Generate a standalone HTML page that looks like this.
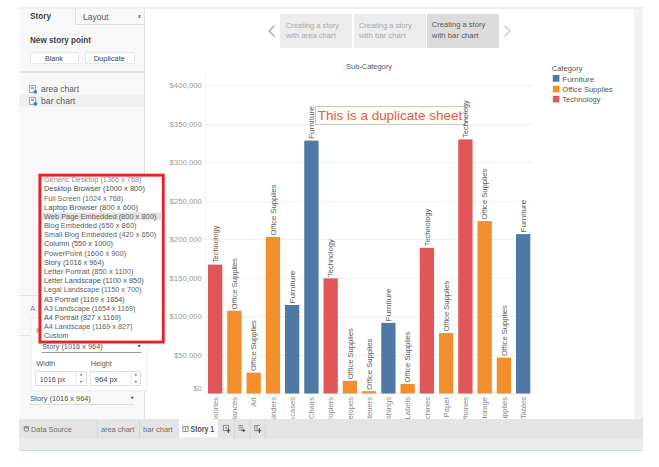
<!DOCTYPE html>
<html><head><meta charset="utf-8">
<style>
*{margin:0;padding:0}
html,body{width:659px;height:467px;overflow:hidden;background:#fff}
svg{position:absolute;left:0;top:0;font-family:"Liberation Sans",sans-serif}
</style></head><body>
<svg width="659" height="467" viewBox="0 0 659 467">
<rect x="19" y="7" width="624" height="2" fill="#efefef"/>
<rect x="19" y="9" width="125" height="410" fill="#f8f8f8"/>
<rect x="144" y="9" width="1" height="410" fill="#e0e0e0"/>
<rect x="75" y="9" width="1" height="15" fill="#dedede"/>
<rect x="75" y="24" width="69" height="1" fill="#dedede"/>
<text x="30" y="19.1" font-size="8.6" fill="#444" textLength="21" lengthAdjust="spacingAndGlyphs" font-weight="bold">Story</text>
<text x="83" y="20.3" font-size="8.6" fill="#555" textLength="25.5" lengthAdjust="spacingAndGlyphs">Layout</text>
<rect x="138.5" y="15" width="2" height="3" fill="#8a8a8a"/>
<text x="30" y="43.1" font-size="9.0" fill="#444" textLength="61" lengthAdjust="spacingAndGlyphs" font-weight="bold">New story point</text>
<rect x="30.5" y="52.5" width="48" height="11" fill="#fff" stroke="#e8e8e8" stroke-width="1"/>
<text x="44.9" y="61.3" font-size="8" fill="#444" textLength="18" lengthAdjust="spacingAndGlyphs">Blank</text>
<rect x="85.5" y="52.5" width="49" height="11" fill="#fff" stroke="#e8e8e8" stroke-width="1"/>
<text x="93.7" y="61.3" font-size="8" fill="#444" textLength="31.2" lengthAdjust="spacingAndGlyphs">Duplicate</text>
<rect x="19" y="71" width="125" height="2" fill="#e6e6e6"/>
<rect x="19" y="94.5" width="125" height="12.5" fill="#efefef"/>
<rect x="29.5" y="85.5" width="6" height="7" fill="#f4f4f4" stroke="#aaaaaa" stroke-width="1.1"/>
<rect x="31" y="87" width="3" height="2" fill="#aaa"/>
<circle cx="35.3" cy="91.8" r="1.9" fill="#3b8ab5"/>
<text x="41" y="92" font-size="9.0" fill="#5a5a5a" textLength="38" lengthAdjust="spacingAndGlyphs">area chart</text>
<rect x="29.5" y="97.5" width="6" height="7" fill="#f4f4f4" stroke="#aaaaaa" stroke-width="1.1"/>
<rect x="31" y="99" width="3" height="2" fill="#aaa"/>
<circle cx="35.3" cy="103.8" r="1.9" fill="#3b8ab5"/>
<text x="41" y="104" font-size="9.0" fill="#5a5a5a" textLength="34.3" lengthAdjust="spacingAndGlyphs">bar chart</text>
<rect x="19" y="295" width="20" height="1" fill="#e2e2e2"/>
<text x="30" y="311" font-size="8" fill="#888">A</text>
<rect x="19" y="335" width="12" height="1" fill="#e2e2e2"/>
<rect x="31" y="318" width="116" height="73" fill="#fff" stroke="#ececec" stroke-width="1"/>
<text x="36.2" y="332.7" font-size="7" fill="#666">H</text>
<text x="42.2" y="349.3" font-size="7.6" fill="#555" textLength="60.5" lengthAdjust="spacingAndGlyphs">Story (1016 x 964)</text>
<path d="M137.5,345 L141,345 L139.25,347.5 Z" fill="#555"/>
<rect x="41.7" y="352" width="99.3" height="1" fill="#999"/>
<text x="36.2" y="366.2" font-size="7.6" fill="#555" textLength="19.1" lengthAdjust="spacingAndGlyphs">Width</text>
<text x="90.8" y="366.2" font-size="7.6" fill="#555" textLength="21" lengthAdjust="spacingAndGlyphs">Height</text>
<rect x="35.5" y="371.5" width="51" height="14" fill="#fff" stroke="#e0e0e0" stroke-width="1"/>
<rect x="75.7" y="372" width="1" height="13" fill="#e6e6e6"/>
<text x="39.8" y="382.3" font-size="7.6" fill="#444" textLength="25.5" lengthAdjust="spacingAndGlyphs">1016 px</text>
<path d="M79.5,375.5 L82.5,375.5 L81.0,373.5 Z" fill="#777"/>
<path d="M79.5,381 L82.5,381 L81.0,383 Z" fill="#777"/>
<rect x="90.5" y="371.5" width="50" height="14" fill="#fff" stroke="#e0e0e0" stroke-width="1"/>
<rect x="130.5" y="372" width="1" height="13" fill="#e6e6e6"/>
<text x="94.8" y="382.3" font-size="7.6" fill="#444" textLength="22.8" lengthAdjust="spacingAndGlyphs">964 px</text>
<path d="M134.3,375.5 L137.3,375.5 L135.8,373.5 Z" fill="#777"/>
<path d="M134.3,381 L137.3,381 L135.8,383 Z" fill="#777"/>
<text x="30.2" y="400.8" font-size="7.6" fill="#555" textLength="60.6" lengthAdjust="spacingAndGlyphs">Story (1016 x 964)</text>
<path d="M130.5,396.8 L134,396.8 L132.25,399.3 Z" fill="#555"/>
<rect x="29.5" y="404" width="104.5" height="1" fill="#dcdcdc"/>
<rect x="39.9" y="175.15" width="123.35" height="166.9" fill="#fff" stroke="#e8202a" stroke-width="2.9"/>
<rect x="41.5" y="212.4" width="120" height="8" fill="#e4e4e4"/>
<clipPath id="cl"><rect x="41.5" y="176.5" width="120" height="164.3"/></clipPath><g clip-path="url(#cl)">
<text x="43.9" y="182.2" font-size="7.6" fill="#888" textLength="97.6" lengthAdjust="spacingAndGlyphs">Generic Desktop (1366 x 768)</text>
<text x="43.9" y="191.38" font-size="7.6" fill="#4d4d4d" textLength="101.0" lengthAdjust="spacingAndGlyphs">Desktop Browser (1000 x 800)</text>
<text x="43.9" y="200.56" font-size="7.6" fill="#666" textLength="79.3" lengthAdjust="spacingAndGlyphs">Full Screen (1024 x 768)</text>
<text x="43.9" y="209.74" font-size="7.6" fill="#505050" textLength="94.2" lengthAdjust="spacingAndGlyphs">Laptop Browser (800 x 600)</text>
<text x="43.9" y="218.92" font-size="7.6" fill="#606060" textLength="112.4" lengthAdjust="spacingAndGlyphs">Web Page Embedded (800 x 800)</text>
<text x="43.9" y="228.1" font-size="7.6" fill="#5e5e5e" textLength="92.6" lengthAdjust="spacingAndGlyphs">Blog Embedded (650 x 860)</text>
<text x="43.9" y="237.28" font-size="7.6" fill="#646464" textLength="112.4" lengthAdjust="spacingAndGlyphs">Small Blog Embedded (420 x 650)</text>
<text x="43.9" y="246.46" font-size="7.6" fill="#505050" textLength="69.1" lengthAdjust="spacingAndGlyphs">Column (550 x 1000)</text>
<text x="43.9" y="255.64" font-size="7.6" fill="#606060" textLength="82.3" lengthAdjust="spacingAndGlyphs">PowerPoint (1600 x 900)</text>
<text x="43.9" y="264.82" font-size="7.6" fill="#505050" textLength="60.0" lengthAdjust="spacingAndGlyphs">Story (1016 x 964)</text>
<text x="43.9" y="274.0" font-size="7.6" fill="#606060" textLength="89.6" lengthAdjust="spacingAndGlyphs">Letter Portrait (850 x 1100)</text>
<text x="43.9" y="283.18" font-size="7.6" fill="#505050" textLength="99.8" lengthAdjust="spacingAndGlyphs">Letter Landscape (1100 x 850)</text>
<text x="43.9" y="292.36" font-size="7.6" fill="#646464" textLength="97.6" lengthAdjust="spacingAndGlyphs">Legal Landscape (1150 x 700)</text>
<text x="43.9" y="301.54" font-size="7.6" fill="#505050" textLength="80.9" lengthAdjust="spacingAndGlyphs">A3 Portrait (1169 x 1654)</text>
<text x="43.9" y="310.72" font-size="7.6" fill="#606060" textLength="91.4" lengthAdjust="spacingAndGlyphs">A3 Landscape (1654 x 1169)</text>
<text x="43.9" y="319.9" font-size="7.6" fill="#505050" textLength="77.1" lengthAdjust="spacingAndGlyphs">A4 Portrait (827 x 1169)</text>
<text x="43.9" y="329.08" font-size="7.6" fill="#5e5e5e" textLength="88.5" lengthAdjust="spacingAndGlyphs">A4 Landscape (1169 x 827)</text>
<text x="43.9" y="338.26" font-size="7.6" fill="#555" textLength="24.7" lengthAdjust="spacingAndGlyphs">Custom</text>
</g>
<polyline points="274.5,25.5 269,31 274.5,36.5" fill="none" stroke="#a8a8a8" stroke-width="1.3"/>
<rect x="280" y="14" width="72" height="34" fill="#ececec"/>
<rect x="354" y="14" width="72" height="34" fill="#ececec"/>
<rect x="427" y="14" width="72" height="34" fill="#dcdcdc"/>
<text x="285.7" y="27.6" font-size="7.9" fill="#a9a9a9" textLength="53.3" lengthAdjust="spacingAndGlyphs">Creating a story</text>
<text x="285.7" y="38" font-size="7.9" fill="#a9a9a9" textLength="50.1" lengthAdjust="spacingAndGlyphs">with area chart</text>
<text x="358.9" y="27.6" font-size="7.9" fill="#a9a9a9" textLength="52.8" lengthAdjust="spacingAndGlyphs">Creating a story</text>
<text x="358.9" y="38" font-size="7.9" fill="#a9a9a9" textLength="46.7" lengthAdjust="spacingAndGlyphs">with bar chart</text>
<text x="431.8" y="27.4" font-size="7.9" fill="#5a5a5a" textLength="53.4" lengthAdjust="spacingAndGlyphs">Creating a story</text>
<text x="431.8" y="37.9" font-size="7.9" fill="#5a5a5a" textLength="46.6" lengthAdjust="spacingAndGlyphs">with bar chart</text>
<polyline points="504.5,25.5 510,31 504.5,36.5" fill="none" stroke="#c8c8c8" stroke-width="1.3"/>
<rect x="634" y="9" width="9" height="410" fill="#f2f2f2"/>
<text x="346.1" y="69.2" font-size="7.9" fill="#555" textLength="45.8" lengthAdjust="spacingAndGlyphs">Sub-Category</text>
<text x="201.9" y="391.2" font-size="7.75" fill="#9a9a9a" text-anchor="end">$0</text>
<line x1="203" y1="355.5" x2="532" y2="355.5" stroke="#f0f0f0" stroke-width="1"/>
<text x="201.9" y="357.5" font-size="7.75" fill="#9a9a9a" text-anchor="end">$50,000</text>
<line x1="203" y1="316.5" x2="532" y2="316.5" stroke="#f0f0f0" stroke-width="1"/>
<text x="201.9" y="319.0" font-size="7.75" fill="#9a9a9a" text-anchor="end">$100,000</text>
<line x1="203" y1="278.5" x2="532" y2="278.5" stroke="#f0f0f0" stroke-width="1"/>
<text x="201.9" y="280.5" font-size="7.75" fill="#9a9a9a" text-anchor="end">$150,000</text>
<line x1="203" y1="239.5" x2="532" y2="239.5" stroke="#f0f0f0" stroke-width="1"/>
<text x="201.9" y="242.0" font-size="7.75" fill="#9a9a9a" text-anchor="end">$200,000</text>
<line x1="203" y1="201.5" x2="532" y2="201.5" stroke="#f0f0f0" stroke-width="1"/>
<text x="201.9" y="203.5" font-size="7.75" fill="#9a9a9a" text-anchor="end">$250,000</text>
<line x1="203" y1="162.5" x2="532" y2="162.5" stroke="#f0f0f0" stroke-width="1"/>
<text x="201.9" y="165.0" font-size="7.75" fill="#9a9a9a" text-anchor="end">$300,000</text>
<line x1="203" y1="124.5" x2="532" y2="124.5" stroke="#f0f0f0" stroke-width="1"/>
<text x="201.9" y="126.5" font-size="7.75" fill="#9a9a9a" text-anchor="end">$350,000</text>
<line x1="203" y1="85.5" x2="532" y2="85.5" stroke="#f0f0f0" stroke-width="1"/>
<text x="201.9" y="88.0" font-size="7.75" fill="#9a9a9a" text-anchor="end">$400,000</text>
<line x1="205.5" y1="71" x2="205.5" y2="395" stroke="#f3f3f3" stroke-width="1"/>
<line x1="203" y1="393.5" x2="532" y2="393.5" stroke="#f0f0f0" stroke-width="1"/>
<rect x="208.00" y="264.6" width="14.3" height="128.9" fill="#e15759"/>
<rect x="227.25" y="310.7" width="14.3" height="82.8" fill="#f28e2b"/>
<rect x="246.50" y="372.6" width="14.3" height="20.9" fill="#f28e2b"/>
<rect x="265.75" y="236.9" width="14.3" height="156.6" fill="#f28e2b"/>
<rect x="285.00" y="305.0" width="14.3" height="88.5" fill="#4e79a7"/>
<rect x="304.25" y="140.6" width="14.3" height="252.9" fill="#4e79a7"/>
<rect x="323.50" y="278.4" width="14.3" height="115.1" fill="#e15759"/>
<rect x="342.75" y="380.8" width="14.3" height="12.7" fill="#f28e2b"/>
<rect x="362.00" y="391.2" width="14.3" height="2.3" fill="#f28e2b"/>
<rect x="381.25" y="322.9" width="14.3" height="70.6" fill="#4e79a7"/>
<rect x="400.50" y="383.9" width="14.3" height="9.6" fill="#f28e2b"/>
<rect x="419.75" y="247.8" width="14.3" height="145.7" fill="#e15759"/>
<rect x="439.00" y="333.1" width="14.3" height="60.4" fill="#f28e2b"/>
<rect x="458.25" y="139.4" width="14.3" height="254.1" fill="#e15759"/>
<rect x="477.50" y="221.1" width="14.3" height="172.4" fill="#f28e2b"/>
<rect x="496.75" y="357.6" width="14.3" height="35.9" fill="#f28e2b"/>
<rect x="516.00" y="234.1" width="14.3" height="159.4" fill="#4e79a7"/>
<rect x="315.5" y="106.5" width="150" height="18" fill="#fdfcf3" stroke="#c9c9c0" stroke-width="1"/>
<text x="317.8" y="120" font-size="13.6" fill="#e05858" textLength="144.4" lengthAdjust="spacingAndGlyphs">This is a duplicate sheet</text>
<text transform="translate(217.8,263.1) rotate(-90)" font-size="7.5" fill="#5a5a5a" textLength="37.5" lengthAdjust="spacingAndGlyphs">Technology</text>
<text transform="translate(237.1,309.2) rotate(-90)" font-size="7.5" fill="#5a5a5a" textLength="51.0" lengthAdjust="spacingAndGlyphs">Office Supplies</text>
<text transform="translate(256.4,371.1) rotate(-90)" font-size="7.5" fill="#5a5a5a" textLength="51.0" lengthAdjust="spacingAndGlyphs">Office Supplies</text>
<text transform="translate(275.6,235.4) rotate(-90)" font-size="7.5" fill="#5a5a5a" textLength="51.0" lengthAdjust="spacingAndGlyphs">Office Supplies</text>
<text transform="translate(294.8,303.5) rotate(-90)" font-size="7.5" fill="#5a5a5a" textLength="33.0" lengthAdjust="spacingAndGlyphs">Furniture</text>
<text transform="translate(314.1,139.1) rotate(-90)" font-size="7.5" fill="#5a5a5a" textLength="33.0" lengthAdjust="spacingAndGlyphs">Furniture</text>
<text transform="translate(333.3,276.9) rotate(-90)" font-size="7.5" fill="#5a5a5a" textLength="37.5" lengthAdjust="spacingAndGlyphs">Technology</text>
<text transform="translate(352.6,379.3) rotate(-90)" font-size="7.5" fill="#5a5a5a" textLength="51.0" lengthAdjust="spacingAndGlyphs">Office Supplies</text>
<text transform="translate(371.8,389.7) rotate(-90)" font-size="7.5" fill="#5a5a5a" textLength="51.0" lengthAdjust="spacingAndGlyphs">Office Supplies</text>
<text transform="translate(391.1,321.4) rotate(-90)" font-size="7.5" fill="#5a5a5a" textLength="33.0" lengthAdjust="spacingAndGlyphs">Furniture</text>
<text transform="translate(410.3,382.4) rotate(-90)" font-size="7.5" fill="#5a5a5a" textLength="51.0" lengthAdjust="spacingAndGlyphs">Office Supplies</text>
<text transform="translate(429.6,246.3) rotate(-90)" font-size="7.5" fill="#5a5a5a" textLength="37.5" lengthAdjust="spacingAndGlyphs">Technology</text>
<text transform="translate(448.8,331.6) rotate(-90)" font-size="7.5" fill="#5a5a5a" textLength="51.0" lengthAdjust="spacingAndGlyphs">Office Supplies</text>
<text transform="translate(468.1,137.9) rotate(-90)" font-size="7.5" fill="#5a5a5a" textLength="37.5" lengthAdjust="spacingAndGlyphs">Technology</text>
<text transform="translate(487.3,219.6) rotate(-90)" font-size="7.5" fill="#5a5a5a" textLength="51.0" lengthAdjust="spacingAndGlyphs">Office Supplies</text>
<text transform="translate(506.6,356.1) rotate(-90)" font-size="7.5" fill="#5a5a5a" textLength="51.0" lengthAdjust="spacingAndGlyphs">Office Supplies</text>
<text transform="translate(525.9,232.6) rotate(-90)" font-size="7.5" fill="#5a5a5a" textLength="33.0" lengthAdjust="spacingAndGlyphs">Furniture</text>
<clipPath id="clipx"><rect x="200" y="395" width="340" height="24"/></clipPath><g clip-path="url(#clipx)">
<text transform="translate(217.8,397) rotate(-90)" text-anchor="end" font-size="7.6" fill="#8c8c8c">Accessories</text>
<text transform="translate(237.1,397) rotate(-90)" text-anchor="end" font-size="7.6" fill="#8c8c8c">Appliances</text>
<text transform="translate(256.4,397) rotate(-90)" text-anchor="end" font-size="7.6" fill="#8c8c8c">Art</text>
<text transform="translate(275.6,397) rotate(-90)" text-anchor="end" font-size="7.6" fill="#8c8c8c">Binders</text>
<text transform="translate(294.8,397) rotate(-90)" text-anchor="end" font-size="7.6" fill="#8c8c8c">Bookcases</text>
<text transform="translate(314.1,397) rotate(-90)" text-anchor="end" font-size="7.6" fill="#8c8c8c">Chairs</text>
<text transform="translate(333.3,397) rotate(-90)" text-anchor="end" font-size="7.6" fill="#8c8c8c">Copiers</text>
<text transform="translate(352.6,397) rotate(-90)" text-anchor="end" font-size="7.6" fill="#8c8c8c">Envelopes</text>
<text transform="translate(371.8,397) rotate(-90)" text-anchor="end" font-size="7.6" fill="#8c8c8c">Fasteners</text>
<text transform="translate(391.1,397) rotate(-90)" text-anchor="end" font-size="7.6" fill="#8c8c8c">Furnishings</text>
<text transform="translate(410.3,397) rotate(-90)" text-anchor="end" font-size="7.6" fill="#8c8c8c">Labels</text>
<text transform="translate(429.6,397) rotate(-90)" text-anchor="end" font-size="7.6" fill="#8c8c8c">Machines</text>
<text transform="translate(448.8,397) rotate(-90)" text-anchor="end" font-size="7.6" fill="#8c8c8c">Paper</text>
<text transform="translate(468.1,397) rotate(-90)" text-anchor="end" font-size="7.6" fill="#8c8c8c">Phones</text>
<text transform="translate(487.3,397) rotate(-90)" text-anchor="end" font-size="7.6" fill="#8c8c8c">Storage</text>
<text transform="translate(506.6,397) rotate(-90)" text-anchor="end" font-size="7.6" fill="#8c8c8c">Supplies</text>
<text transform="translate(525.9,397) rotate(-90)" text-anchor="end" font-size="7.6" fill="#8c8c8c">Tables</text>
</g>
<text x="551.7" y="71.3" font-size="7.8" fill="#555" textLength="30.8" lengthAdjust="spacingAndGlyphs">Category</text>
<rect x="552.8" y="75" width="6.6" height="6.7" fill="#4e79a7"/>
<text x="562.3" y="82" font-size="7.8" fill="#555" textLength="31.9" lengthAdjust="spacingAndGlyphs">Furniture</text>
<rect x="552.8" y="85.8" width="6.6" height="6.6" fill="#f28e2b"/>
<text x="562.3" y="91.7" font-size="7.8" fill="#555" textLength="50.5" lengthAdjust="spacingAndGlyphs">Office Supplies</text>
<rect x="552.8" y="95.8" width="6.6" height="6.6" fill="#e15759"/>
<text x="562.3" y="101.8" font-size="7.8" fill="#555" textLength="38.3" lengthAdjust="spacingAndGlyphs">Technology</text>
<rect x="19" y="419" width="624" height="19" fill="#e4e4e4"/>
<rect x="19" y="438" width="624" height="12" fill="#ebebeb"/>
<rect x="19" y="450" width="624" height="1" fill="#cddcf0"/>
<rect x="97" y="419" width="1" height="19" fill="#d5d5d5"/>
<rect x="139" y="419" width="1" height="19" fill="#d5d5d5"/>
<rect x="234" y="419" width="1" height="19" fill="#d5d5d5"/>
<rect x="249.5" y="419" width="1" height="19" fill="#d5d5d5"/>
<rect x="264.5" y="419" width="1" height="19" fill="#d5d5d5"/>
<rect x="179" y="419" width="39" height="18.5" fill="#fafafa"/>
<path d="M24.3,427 q2.1,-1.3 4.2,0 v3.6 q-2.1,1.4 -4.2,0 z M24.3,427.6 q2.1,1 4.2,0" fill="none" stroke="#8a8a8a" stroke-width="1.1"/>
<text x="31.1" y="432" font-size="8" fill="#6e6e6e" textLength="40.6" lengthAdjust="spacingAndGlyphs">Data Source</text>
<text x="100.9" y="432" font-size="8" fill="#6e6e6e" textLength="33.4" lengthAdjust="spacingAndGlyphs">area chart</text>
<text x="143.1" y="432" font-size="8" fill="#6e6e6e" textLength="29.6" lengthAdjust="spacingAndGlyphs">bar chart</text>
<path d="M182.8,426.5 h5.4 v5 h-5.4 z M185.5,426.5 v5 M182.8,427.8 h1.5 M186.8,427.8 h1.4" fill="none" stroke="#9a9a9a" stroke-width="1"/>
<text x="190.5" y="431.8" font-size="8.2" fill="#555" textLength="23.6" lengthAdjust="spacingAndGlyphs" font-weight="bold">Story 1</text>
<rect x="223.4" y="425.4" width="5.2" height="5.2" fill="none" stroke="#8a8a8a" stroke-width="1"/>
<rect x="225" y="427" width="2" height="2" fill="#aaa"/>
<path d="M228.4,428.3 v4.6 M226.6,430.6 h3.6" stroke="#555" stroke-width="1.2"/>
<path d="M238.5,425.6 h4.6 M238.5,427.8 h4.6 M238.5,430 h4" stroke="#8a8a8a" stroke-width="1.1"/>
<path d="M243,428.5 l2.6,2 l-2.6,2 z" fill="#555"/><path d="M241.5,430.5 h2" stroke="#555" stroke-width="1.1"/>
<path d="M254.5,425.5 h5 M254.8,425.5 v5.3 M257,425.5 v5.3 M254.5,430.8 h3" fill="none" stroke="#8a8a8a" stroke-width="1"/>
<path d="M259.4,428.3 v4.6 M257.6,430.6 h3.6" stroke="#555" stroke-width="1.2"/>
</svg>
</body></html>
